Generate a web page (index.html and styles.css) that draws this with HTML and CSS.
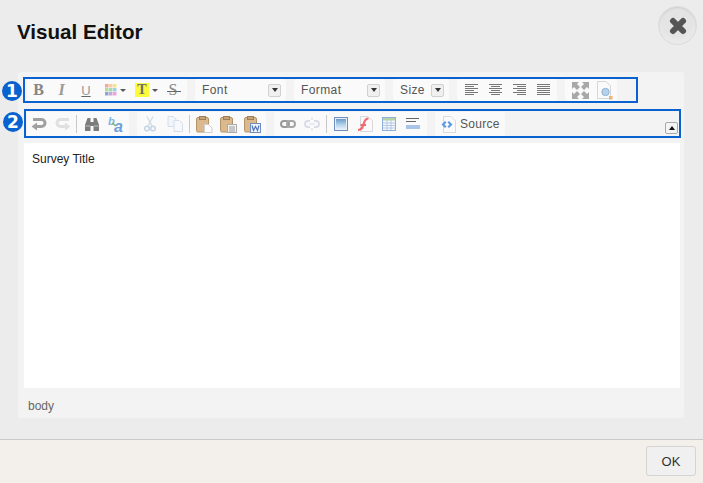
FILE: index.html
```html
<!DOCTYPE html>
<html lang="en">
<head>
    <meta charset="UTF-8">
    <title>Visual Editor</title>
    <link rel="stylesheet" href="styles.css">
</head>
<body>
    <div class="header">
        <h1>Visual Editor</h1>
        <button class="close-btn">
            <svg width="22" height="22" viewBox="0 0 22 22"><path d="M6 6L16 16M16 6L6 16" stroke="#555" stroke-width="6" stroke-linecap="round"/></svg>
        </button>
    </div>

    <div class="editor">
        <!-- Toolbar row 1 -->
        <div class="toolbar toolbar-one">
            <span class="badge badge-one">1</span>
            <div class="group group-basic">
                <span class="btn letter bold">B</span>
                <span class="btn letter italic">I</span>
                <span class="btn letter under">U</span>
                <span class="btn color-btn">
                    <svg width="12" height="12" viewBox="0 0 12 12">
                        <rect x="0" y="0" width="3.500" height="3.500" fill="#f4a6a0"/><rect x="4" y="0" width="3.500" height="3.500" fill="#f6cf9a"/><rect x="8" y="0" width="3.500" height="3.500" fill="#f3e58e"/>
                        <rect x="0" y="4" width="3.500" height="3.500" fill="#b7d9a0"/><rect x="4" y="4" width="3.500" height="3.500" fill="#9fdcb0"/><rect x="8" y="4" width="3.500" height="3.500" fill="#a5cdea"/>
                        <rect x="0" y="8" width="3.500" height="3.500" fill="#8fa6cf"/><rect x="4" y="8" width="3.500" height="3.500" fill="#c9a6e0"/><rect x="8" y="8" width="3.500" height="3.500" fill="#eea6d8"/>
                    </svg>
                    <i class="caret"></i>
                </span>
                <span class="btn color-btn high-btn"><span class="letter bold high">T</span><i class="caret"></i></span>
                <span class="btn letter strike">S</span>
            </div>
            <div class="group combo combo-font"><span>Font</span><i class="combo-arrow"></i></div>
            <div class="group combo combo-format"><span>Format</span><i class="combo-arrow"></i></div>
            <div class="group combo combo-size"><span>Size</span><i class="combo-arrow"></i></div>
            <div class="group group-align">
                <span class="btn"><svg width="16" height="14" viewBox="0 0 16 14"><path d="M2 1.500H15M2 3.500H11M2 5.500H15M2 7.500H11M2 9.500H15M2 11.500H11" class="lines"/></svg></span>
                <span class="btn"><svg width="16" height="14" viewBox="0 0 16 14"><path d="M2 1.500H15M4 3.500H13M2 5.500H15M4 7.500H13M2 9.500H15M4 11.500H13" class="lines"/></svg></span>
                <span class="btn"><svg width="16" height="14" viewBox="0 0 16 14"><path d="M2 1.500H15M6 3.500H15M2 5.500H15M6 7.500H15M2 9.500H15M6 11.500H15" class="lines"/></svg></span>
                <span class="btn"><svg width="16" height="14" viewBox="0 0 16 14"><path d="M2 1.500H15M2 3.500H15M2 5.500H15M2 7.500H15M2 9.500H15M2 11.500H15" class="lines"/></svg></span>
            </div>
            <div class="group group-tools">
                <span class="btn"><svg width="17" height="17" viewBox="0 0 17 17"><path d="M0 0H7L5 2L8 5L5 8L2 5L0 7ZM17 0V7L15 5L12 8L9 5L12 2L10 0ZM0 17V10L2 12L5 9L8 12L5 15L7 17ZM17 17H10L12 15L9 12L12 9L15 12L17 10Z" fill="#a8a8a8"/></svg></span>
                <span class="btn"><svg width="17" height="19" viewBox="0 0 17 19"><path d="M1.500.5H10L14.500 5V17.500H1.500Z" fill="#fafafa" stroke="#d6d6d6"/><circle cx="9.500" cy="11" r="3.700" fill="#b5d2ec" stroke="#8fb4d6"/><rect x="13" y="15" width="3.500" height="3.500" fill="#e8b67a"/></svg></span>
            </div>
        </div>

        <!-- Toolbar row 2 -->
        <div class="toolbar toolbar-two">
            <span class="badge badge-two">2</span>
            <div class="group group-history">
                <span class="btn"><svg width="16" height="14" viewBox="0 0 16 14"><path d="M2 2.500H10.500A3.500 3.500 0 0 1 10.500 9.500H5" fill="none" stroke="#a0a0a0" stroke-width="3"/><path d="M6 5.500V13.500L.5 9.500Z" fill="#a0a0a0"/></svg></span>
                <span class="btn"><svg width="16" height="14" viewBox="0 0 16 14"><path d="M14 2.500H5.500A3.500 3.500 0 0 0 5.500 9.500H11" fill="none" stroke="#e0e0e0" stroke-width="3"/><path d="M10 5.500V13.500L15.500 9.500Z" fill="#e0e0e0"/></svg></span>
                <i class="sep"></i>
                <span class="btn"><svg width="14" height="13" viewBox="0 0 14 13"><path d="M2.500 0H5.500V4H8.500V0H11.500L14 7V13H8.500V8H5.500V13H0V7Z" fill="#7c7c7c"/><path d="M.5 8H5M9 8H13.500" stroke="#c0c0c0"/></svg></span>
                <span class="btn"><svg class="replace-icon" width="17" height="17" viewBox="0 0 17 17"><text x="0" y="9" class="replace-b">b</text><text x="6" y="16" class="replace-a">a</text><path d="M4 7L8 10" stroke="#7fb069" stroke-width="1.500"/></svg></span>
            </div>
            <div class="group group-clip">
                <span class="btn btn-cut"><svg width="12" height="16" viewBox="0 0 12 16"><path d="M9 .5L4 10M3 .5L8 10" stroke="#d3dde8" stroke-width="1.500"/><circle cx="3" cy="12.500" r="2.300" fill="none" stroke="#c4d4e4" stroke-width="1.500"/><circle cx="9" cy="12.500" r="2.300" fill="none" stroke="#c4d4e4" stroke-width="1.500"/></svg></span>
                <span class="btn btn-copy"><svg width="17" height="16" viewBox="0 0 17 16"><path d="M1 .5H6.500L9 3V10.500H1Z" fill="#f2f5fa" stroke="#d5deeb"/><path d="M7 4.500H12.500L15.500 7.500V15.500H7Z" fill="#f6f8fb" stroke="#d5deeb"/></svg></span>
                <i class="sep"></i>
                <span class="btn"><svg width="17" height="17" viewBox="0 0 17 17"><rect x=".5" y="1.500" width="12" height="14.500" rx="1.500" fill="#dcb98c" stroke="#b3946a"/><rect x="3.500" y=".5" width="6" height="3" fill="#c9a375" stroke="#9c8059"/><path d="M8.500 8.500H12.500L16 12V16.500H8.500Z" fill="#fcfcfc" stroke="#cfcfcf"/></svg></span>
                <span class="btn"><svg width="17" height="17" viewBox="0 0 17 17"><rect x=".5" y="1.500" width="12" height="14.500" rx="1.500" fill="#dcb98c" stroke="#b3946a"/><rect x="3.500" y=".5" width="6" height="3" fill="#c9a375" stroke="#9c8059"/><rect x="7.500" y="8.500" width="9" height="8" fill="#f4f4f4" stroke="#aaa"/><path d="M9 11H15M9 13H15M9 15H15" stroke="#999"/></svg></span>
                <span class="btn"><svg width="17" height="17" viewBox="0 0 17 17"><rect x=".5" y="1.500" width="12" height="14.500" rx="1.500" fill="#dcb98c" stroke="#b3946a"/><rect x="3.500" y=".5" width="6" height="3" fill="#c9a375" stroke="#9c8059"/><rect x="6.500" y="7.500" width="10" height="9" fill="#eef2fa" stroke="#6f8cc4"/><path d="M8 9.500L9.500 14.500L11.500 10.500L13.500 14.500L15 9.500" fill="none" stroke="#4f74bf" stroke-width="1.200"/></svg></span>
            </div>
            <div class="group group-insert">
                <span class="btn"><svg width="16" height="8" viewBox="0 0 16 8"><rect x="1" y="1" width="8" height="6" rx="3" fill="none" stroke="#999" stroke-width="2"/><rect x="7" y="1" width="8" height="6" rx="3" fill="none" stroke="#a5a5a5" stroke-width="2"/></svg></span>
                <span class="btn"><svg width="16" height="14" viewBox="0 0 16 14"><path d="M6 4H4A3 3 0 0 0 4 10H6M10 4H12A3 3 0 0 1 12 10H10" fill="none" stroke="#d8dde6" stroke-width="2"/><path d="M5 7H11M8 0V3M8 11V14" stroke="#cfdcf0"/></svg></span>
                <i class="sep"></i>
                <span class="btn"><svg width="14" height="14" viewBox="0 0 14 14"><defs><linearGradient id="pic" x1="0" y1="0" x2="0" y2="1"><stop offset="0" stop-color="#6f9ac4"/><stop offset=".5" stop-color="#a9cdea"/><stop offset="1" stop-color="#e8eef7"/></linearGradient></defs><rect x=".5" y=".5" width="13" height="13" fill="#e8eef7" stroke="#6f8fbe"/><rect x="2" y="2" width="10" height="10" fill="url(#pic)"/></svg></span>
                <span class="btn"><svg width="16" height="16" viewBox="0 0 16 16"><path d="M3.500.5H11L15.500 5V15.500H3.500Z" fill="#fafafa" stroke="#d8d8d8"/><path d="M1 14C5 14 6 11 7 7C8 3.500 9 2.500 11.500 2.500M3.500 9H9" fill="none" stroke="#f06a70" stroke-width="2.200"/></svg></span>
                <span class="btn"><svg width="14" height="14" viewBox="0 0 14 14"><rect x=".5" y=".5" width="13" height="13" fill="#f5f8fc" stroke="#8fb0d8"/><rect x="1" y="1" width="12" height="2.500" fill="#b8d2a8"/><path d="M1 6H13M1 8.500H13M1 11H13M5 3V13M9 3V13" stroke="#b3c8e4"/></svg></span>
                <span class="btn"><svg width="14" height="12" viewBox="0 0 14 12"><path d="M0 .5H13M0 3.500H10" stroke="#666"/><rect x="0" y="7" width="14" height="4" fill="#a9c4ea"/></svg></span>
            </div>
            <div class="group group-source">
                <svg width="16" height="17" viewBox="0 0 16 17"><path d="M3.500.5H11L15.500 5V16.500H3.500Z" fill="#fafafa" stroke="#dadada"/><path d="M5 5L1.500 8.500L5 12L6.500 10.500L4.500 8.500L6.500 6.500ZM9 5L12.500 8.500L9 12L7.500 10.500L9.500 8.500L7.500 6.500Z" fill="#5c9be0"/></svg>
                <span>Source</span>
            </div>
            <button class="collapse-btn"><i></i></button>
        </div>

        <div class="content">Survey Title</div>
        <div class="status">body</div>
    </div>

    <div class="footer">
        <button class="ok-btn">OK</button>
    </div>
</body>
</html>
```

FILE: styles.css
```css
* {
    box-sizing: border-box;
}

body {
    display: flex;
    flex-direction: column;
    width: 703px;
    height: 483px;
    margin: 0;
    overflow: hidden;
    background-color: #ececec;
    font-family: "Liberation Sans", Arial, sans-serif;
    font-size: 12px;
    color: #222;
}

/* Header */
.header {
    display: flex;
    justify-content: space-between;
    align-items: flex-start;
    height: 72px;
    padding: 6px 6px 0 17px;
}

h1 {
    margin: 16px 0 0;
    font-size: 20.6px;
    line-height: 20px;
    color: #111;
}

.close-btn {
    display: flex;
    justify-content: center;
    align-items: center;
    width: 39px;
    height: 39px;
    padding: 0;
    border: 1px solid #dcdcdc;
    border-radius: 50%;
    background: radial-gradient(circle at 50% 40%, #e4e4e4 50%, #f4f4f4 100%);
    box-shadow: inset 0 1px 2px #ccc;
}

/* Editor panel */
.editor {
    display: flex;
    flex-direction: column;
    width: 666px;
    height: 346px;
    margin-left: 18px;
    padding: 5px 0 0 5px;
    border-radius: 3px;
    background-color: #f3f3f3;
}

.toolbar {
    position: relative;
    display: flex;
    gap: 8px;
    border: 2px solid #0a62d0;
    padding-left: 2px;
}

.toolbar-one {
    width: 615px;
    height: 26px;
}

.toolbar-two {
    width: 657px;
    height: 29px;
    margin: 6px 0 5px 1px;
    padding-top: 1px;
    padding-left: 1px;
}

.badge {
    position: absolute;
    display: flex;
    justify-content: center;
    align-items: center;
    width: 20px;
    height: 20px;
    border-radius: 50%;
    background-color: #0a62d0;
    color: #fff;
    font-family: "DejaVu Sans", sans-serif;
    font-size: 17px;
    font-weight: bold;
}

.badge-one {
    left: -23px;
    top: 2px;
}

.badge-two {
    left: -23px;
    top: 1px;
}

.group {
    display: flex;
    align-items: center;
    height: 22px;
    border-radius: 3px;
    background-color: #fafafa;
}

.toolbar-two .group {
    height: 24px;
}

.btn {
    display: flex;
    justify-content: center;
    align-items: center;
    width: 24px;
    height: 100%;
    flex: none;
}

.letter {
    font-family: "Liberation Serif", serif;
    font-size: 16px;
    color: #868686;
}

.bold {
    width: 23px;
    font-weight: bold;
}

.italic {
    width: 23px;
    font-style: italic;
    font-weight: bold;
    color: #999;
}

.under {
    width: 26px;
    font-family: "Liberation Sans", sans-serif;
    font-size: 13px;
    color: #999;
    text-decoration: underline;
    text-decoration-color: #666;
}

/* the strike bar runs past the letter */
.strike {
    position: relative;
    color: #888;
}

.strike::after {
    content: "";
    position: absolute;
    left: 6px;
    top: 12px;
    width: 14px;
    height: 1px;
    background-color: #666;
}

.color-btn {
    justify-content: flex-start;
    gap: 3px;
    width: 29px;
    padding-left: 6px;
}

.high-btn {
    width: 33px;
    padding-left: 7px;
}

.high {
    display: block;
    width: 14px;
    height: 14px;
    background-color: #fbfb3c;
    color: #6e6e6e;
    font-size: 14px;
    line-height: 14px;
    text-align: center;
}

.caret {
    width: 0;
    height: 0;
    border-left: 3px solid transparent;
    border-right: 3px solid transparent;
    border-top: 3px solid #555;
}

.group-basic {
    width: 160px;
}

.combo {
    justify-content: space-between;
    padding: 0 5px 0 7px;
    font-size: 12px;
    letter-spacing: .4px;
    color: #555;
}

.combo-font {
    width: 91px;
}

.combo-format {
    width: 91px;
}

.combo-size {
    width: 56px;
}

.combo-arrow {
    display: flex;
    justify-content: center;
    align-items: center;
    width: 13px;
    height: 13px;
    border: 1px solid #d0d0d0;
    border-radius: 2px;
    background-color: #f0f0f0;
}

.combo-arrow::after {
    content: "";
    border-left: 3px solid transparent;
    border-right: 3px solid transparent;
    border-top: 4px solid #333;
}

.lines {
    fill: none;
    stroke: #777;
}

.group-align {
    width: 100px;
    padding-left: 2px;
}

.group-tools {
    width: 52px;
    padding-left: 3px;
}

.sep {
    flex: none;
    width: 1px;
    height: 18px;
    background-color: #c8c8c8;
}

.group-history {
    width: 102px;
}

.group-history .sep {
    margin: 0 3px 0 1px;
}

.group-clip {
    width: 129px;
}

.btn-cut {
    width: 25px;
}

.btn-copy {
    width: 26px;
}

.group-clip .sep {
    margin: 0 2px 0 1px;
}

.group-insert {
    width: 153px;
    padding-left: 2px;
}

.group-insert .sep {
    margin: 0 2px;
}

.replace-icon {
    overflow: visible;
}

.replace-b {
    font-family: "Liberation Sans", sans-serif;
    font-size: 11px;
    font-weight: bold;
    font-style: italic;
    fill: #7fb5e6;
}

.replace-a {
    font-family: "Liberation Sans", sans-serif;
    font-size: 16px;
    font-weight: bold;
    font-style: italic;
    fill: #6f9fd8;
}

.group-source {
    gap: 4px;
    width: 70px;
    padding-left: 5px;
    letter-spacing: .3px;
    color: #555;
}

.collapse-btn {
    position: absolute;
    right: 1px;
    bottom: 2px;
    display: flex;
    justify-content: center;
    align-items: center;
    width: 13px;
    height: 12px;
    padding: 0;
    border: 1px solid #aaa;
    border-radius: 2px;
    background-color: #f4f4f4;
}

.collapse-btn i {
    border-left: 3px solid transparent;
    border-right: 3px solid transparent;
    border-bottom: 4px solid #111;
}

.content {
    width: 656px;
    height: 245px;
    margin-left: 1px;
    padding: 9px 8px;
    background-color: #fff;
    line-height: 14px;
}

.status {
    padding: 11px 5px 0;
    color: #666;
    line-height: 14px;
}

/* Footer */
.footer {
    display: flex;
    justify-content: flex-end;
    align-items: flex-start;
    height: 44px;
    margin-top: 21px;
    padding: 6px 7px 0 0;
    border-top: 1px solid #c9c9c9;
    background-color: #f3efea;
}

.ok-btn {
    width: 50px;
    height: 30px;
    padding: 0;
    border: 1px solid #d4d4d4;
    border-radius: 3px;
    background-color: #f0f0f0;
    font-family: "Liberation Sans", Arial, sans-serif;
    font-size: 13px;
    color: #333;
}
```
